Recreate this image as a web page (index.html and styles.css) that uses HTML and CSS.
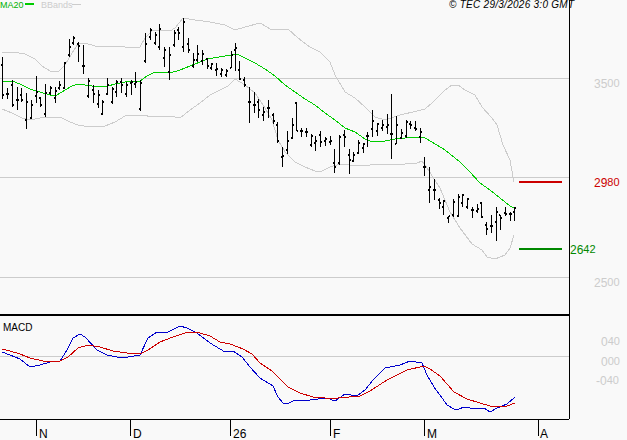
FILE: index.html
```html
<!DOCTYPE html>
<html lang="en">
<head>
<meta charset="utf-8">
<title>Chart</title>
<link rel="stylesheet" href="styles.css">
</head>
<body>
<main class="chart">
<svg class="plot" width="627" height="440" viewBox="0 0 627 440" xmlns="http://www.w3.org/2000/svg">
  <g class="grid">
    <path d="M0 78.500H569M0 177.500H569M0 277.500H569M0 356.500H569"/>
  </g>
  <polyline class="band" points="2,53 12,52 25,54 35,59 42,66 50,71 58,72 65,65 72,53 78,44 85,43 95,46 110,46 125,47 140,47 145,38 152,31 160,30 170,31 175,28 183,18 195,20 210,22 225,25 235,30 245,27 260,23 272,30 288,29 298,38 310,47 320,52 330,62 335,75 345,92 355,98 365,107 375,117 385,120 400,115 417,111 425,109 432,103 445,90 452,85 458,85 465,90 475,95 482,107 492,118 497,125 503,145 510,160 514,182"/>
  <polyline class="band" points="2,109 12,113 22,118 30,120 40,118 50,117 60,117 70,122 78,125 90,127 105,126 115,122 125,116 140,115 155,117 170,116 180,118 190,110 200,103 210,95 220,90 228,86 235,79 245,85 255,93 265,108 272,120 278,140 285,152 295,162 305,167 315,171 322,171 330,167 340,164 350,165 365,166 375,164 390,164 405,164 417,163 422,161 427,168 440,188 450,212 460,228 472,244 482,250 487,257 495,259 505,255 510,248 514,235"/>
  <polyline class="ma" points="2,81 12,81 20,84 30,89 40,92 50,95 57,95 65,90 72,86 78,84 85,85 92,86 108,86 115,84 125,82 140,81 147,76 155,72 165,72 170,73 180,70 190,66 200,62 207,59 225,56 232,55 237,54 245,58 255,63 265,69 275,76 285,85 295,92 305,99 315,105 325,113 335,120 345,128 355,132 365,139 373,142 385,141 395,139 405,138 417,137 425,138 432,142 445,150 460,162 470,172 480,183 490,190 500,198 510,206 514,208"/>
  <path class="bars" d="M2.500 57V99M1 65h1M3 95h1M7.500 88V99M6 94h1M8 94h1M12.500 80V107M11 85h1M13 105h1M17.500 87V110M16 100h1M18 100h1M21.500 88V102M20 95h1M22 100h1M26.500 93V129M25 120h1M27 102h1M31.500 100V119M30 118h1M32 105h1M36.500 76V103M35 96h1M37 92h1M40.500 97V107M39 98h1M41 105h1M45.500 84V117M44 114h1M46 93h1M50.500 86V95M49 93h1M51 88h1M55.500 87V103M54 98h1M56 91h1M59.500 81V90M58 88h1M60 85h1M64.500 62V89M63 88h1M65 63h1M69.500 39V57M68 55h1M70 47h1M73.500 36V45M72 43h1M74 38h1M78.500 42V62M77 44h1M79 46h1M83.500 45V74M82 66h1M84 66h1M88.500 78V98M87 96h1M89 81h1M93.500 85V103M92 90h1M94 94h1M98.500 90V108M97 104h1M99 95h1M102.500 100V115M101 114h1M103 102h1M107.500 78V95M106 94h1M108 85h1M112.500 87V104M111 102h1M113 89h1M116.500 80V97M115 92h1M117 82h1M121.500 78V93M120 82h1M122 85h1M126.500 82V97M125 94h1M127 85h1M131.500 80V95M130 83h1M132 82h1M135.500 72V88M134 84h1M136 82h1M140.500 80V111M139 109h1M141 83h1M145.500 33V63M144 61h1M146 44h1M150.500 28V40M149 37h1M151 30h1M155.500 32V45M154 43h1M156 35h1M159.500 24V50M158 47h1M160 29h1M164.500 47V67M163 58h1M165 50h1M169.500 47V80M168 72h1M170 55h1M174.500 30V47M173 45h1M175 33h1M178.500 27V40M177 30h1M179 33h1M183.500 18V52M182 47h1M184 22h1M188.500 38V53M187 44h1M189 50h1M193.500 53V68M192 66h1M194 60h1M197.500 45V62M196 60h1M198 54h1M202.500 50V65M201 61h1M203 54h1M207.500 58V69M206 59h1M208 66h1M211.500 63V70M210 68h1M212 64h1M216.500 63V76M215 70h1M217 69h1M221.500 68V77M220 74h1M222 70h1M226.500 69V77M225 75h1M227 71h1M231.500 51V68M230 68h1M232 55h1M235.500 43V71M234 50h1M236 48h1M239.500 61V80M238 70h1M240 79h1M244.500 77V87M243 80h1M245 85h1M249.500 87V123M248 102h1M250 102h1M254.500 92V113M253 105h1M255 105h1M258.500 99V118M257 102h1M259 110h1M263.500 107V121M262 115h1M264 112h1M268.500 100V118M267 108h1M269 108h1M273.500 113V124M272 115h1M274 121h1M277.500 122V143M276 125h1M278 141h1M282.500 147V167M281 157h1M283 156h1M287.500 131V154M286 150h1M288 141h1M292.500 118V139M291 138h1M293 125h1M296.500 102V131M295 103h1M297 131h1M301.500 128V137M300 131h1M302 131h1M306.500 128V137M305 132h1M307 132h1M311.500 134V147M310 145h1M312 136h1M315.500 136V151M314 143h1M316 141h1M320.500 131V147M319 135h1M321 142h1M325.500 137V146M324 141h1M326 139h1M330.500 136V145M329 142h1M331 141h1M334.500 149V173M333 163h1M335 167h1M339.500 135V165M338 163h1M340 137h1M344.500 130V147M343 135h1M345 137h1M349.500 149V174M348 155h1M350 160h1M353.500 152V162M352 161h1M354 155h1M358.500 140V154M357 153h1M359 143h1M363.500 143V153M362 148h1M364 144h1M367.500 132V147M366 136h1M368 136h1M372.500 110V137M371 129h1M373 121h1M377.500 123V136M376 131h1M378 124h1M382.500 120V131M381 128h1M383 125h1M387.500 114V134M386 127h1M388 125h1M391.500 94V159M390 134h1M392 134h1M396.500 116V144M395 144h1M397 125h1M401.500 129V139M400 138h1M402 133h1M406.500 120V138M405 136h1M407 122h1M410.500 121V129M409 124h1M411 125h1M415.500 121V131M414 128h1M416 129h1M420.500 128V143M419 137h1M421 132h1M424.500 157V176M423 167h1M425 167h1M429.500 167V203M428 190h1M430 187h1M434.500 179V200M433 190h1M435 190h1M439.500 198V209M438 200h1M440 203h1M443.500 200V215M442 207h1M444 201h1M448.500 216V223M447 218h1M449 216h1M453.500 199V217M452 215h1M454 202h1M458.500 194V217M457 216h1M459 197h1M462.500 194V207M461 203h1M463 195h1M467.500 198V209M466 207h1M468 199h1M472.500 207V218M471 210h1M473 210h1M477.500 204V213M476 211h1M478 209h1M481.500 202V218M480 203h1M482 217h1M486.500 222V235M485 225h1M487 229h1M491.500 215V233M490 226h1M492 226h1M496.500 207V241M495 222h1M497 212h1M500.500 215V230M499 215h1M501 218h1M505.500 207V216M504 213h1M506 214h1M510.500 212V221M509 214h1M511 214h1M514.500 207V221M513 212h1M515 208h1"/>
  <path class="axis" d="M569.500 0V419M0 419.500H569M36.500 419V436M130.500 419V436M230.500 419V436M330.500 419V436M424.500 419V436M538.500 419V436"/>
  <path class="divider" d="M0 315H569"/>
  <path class="level-high" d="M519 182H562"/>
  <path class="level-low" d="M519 249H562"/>
  <path class="legend-ma" d="M25 4H34"/>
  <path class="legend-band" d="M72 4.500H81"/>
  <polyline class="macd" points="2,352 10,355 20,359 30,367 40,365 50,362 60,361 67,350 73,338 80,334 85,337 97,350 107,355 117,357 128,357 140,355 148,338 157,332 168,332 180,326 187,328 197,333 210,343 225,352 233,351 242,357 250,367 260,378 273,386 278,397 283,403 287,404 293,401 310,400 327,398 335,401 345,394 357,396 365,390 373,380 385,368 400,365 410,361 422,363 427,375 434,387 440,395 447,405 454,409 459,409 464,407 470,408 484,408 490,412 497,408 507,404 515,397"/>
  <polyline class="signal" points="2,349 10,351 20,354 30,358 43,361 58,362 68,357 78,348 88,345 100,347 113,351 127,353 140,354 148,350 160,342 173,337 188,332 200,333 210,336 220,342 230,344 243,349 252,354 260,363 272,371 288,387 300,393 313,397 325,398 338,398 360,396 370,391 387,380 407,370 424,366 430,369 440,376 454,392 467,399 480,403 490,406 507,406 515,403"/>
  <text class="t t-legend t-ma" x="0" y="8">MA20</text>
  <text class="t t-legend t-band" x="41" y="8">BBands</text>
  <text class="t t-credit" x="449" y="8">© TEC 29/3/2026 3:0 GMT</text>
  <text class="t t-scale" x="594" y="88"><tspan class="int">35</tspan><tspan class="dec" dy="-1">00</tspan></text>
  <text class="t t-scale t-high" x="594" y="187"><tspan class="int">29</tspan><tspan class="dec" dy="-1">80</tspan></text>
  <text class="t t-scale t-low" x="570" y="254"><tspan class="int">26</tspan><tspan class="dec" dy="-1">42</tspan></text>
  <text class="t t-scale" x="594" y="287"><tspan class="int">25</tspan><tspan class="dec" dy="-1">00</tspan></text>
  <text class="t t-scale" x="601" y="346"><tspan class="int">0</tspan><tspan class="dec" dy="-1">40</tspan></text>
  <text class="t t-scale" x="601" y="366"><tspan class="int">0</tspan><tspan class="dec" dy="-1">00</tspan></text>
  <text class="t t-scale" x="596" y="385"><tspan class="int">-0</tspan><tspan class="dec" dy="-1">40</tspan></text>
  <text class="t t-macd" x="3" y="331">MACD</text>
  <text class="t t-date" x="39" y="438">N</text>
  <text class="t t-date" x="133" y="438">D</text>
  <text class="t t-date" x="233" y="438">26</text>
  <text class="t t-date" x="333" y="438">F</text>
  <text class="t t-date" x="427" y="438">M</text>
  <text class="t t-date" x="540" y="438">A</text>
</svg>
</main>
</body>
</html>
```
FILE: styles.css
```css
html, body {
  margin: 0;
  padding: 0;
  background: #f9f9f9;
}
.chart {
  width: 627px;
  height: 440px;
  overflow: hidden;
}
.plot {
  display: block;
}
.plot path, .plot polyline {
  fill: none;
}
.grid path {
  stroke: #cccccc;
  stroke-width: 1;
  shape-rendering: crispEdges;
}
.band {
  stroke: #cccccc;
  stroke-width: 1;
  shape-rendering: crispEdges;
}
.ma {
  stroke: #00cc00;
  stroke-width: 1;
  shape-rendering: crispEdges;
}
.bars {
  stroke: #000;
  stroke-width: 1.5;
  shape-rendering: crispEdges;
}
.axis {
  stroke: #000;
  stroke-width: 1;
  shape-rendering: crispEdges;
}
.divider {
  stroke: #000;
  stroke-width: 2;
  shape-rendering: crispEdges;
}
.level-high {
  stroke: #cc0000;
  stroke-width: 2;
  shape-rendering: crispEdges;
}
.level-low {
  stroke: #008800;
  stroke-width: 2;
  shape-rendering: crispEdges;
}
.legend-ma {
  stroke: #00cc00;
  stroke-width: 2;
  shape-rendering: crispEdges;
}
.legend-band {
  stroke: #cccccc;
  stroke-width: 1;
  shape-rendering: crispEdges;
}
.macd {
  stroke: #0000cc;
  stroke-width: 1;
  shape-rendering: crispEdges;
}
.signal {
  stroke: #cc0000;
  stroke-width: 1;
  shape-rendering: crispEdges;
}
.t {
  font-family: "Liberation Sans", Arial, sans-serif;
  font-size: 11px;
}
.t-legend {
  font-size: 9px;
}
.t-ma {
  fill: #00b000;
}
.t-band {
  fill: #cccccc;
}
.t-credit {
  fill: #000;
  font-size: 10px;
  font-style: italic;
  letter-spacing: 0.27px;
}
.t-scale {
  fill: #cccccc;
}
.t-scale .int {
  font-size: 12px;
}
.t-scale .dec {
  font-size: 11px;
}
.t-scale.t-high {
  fill: #cc0000;
}
.t-scale.t-low {
  fill: #008800;
}
.t-macd {
  fill: #000;
  font-size: 10px;
}
.t-date {
  fill: #000;
  font-size: 12px;
}
```
